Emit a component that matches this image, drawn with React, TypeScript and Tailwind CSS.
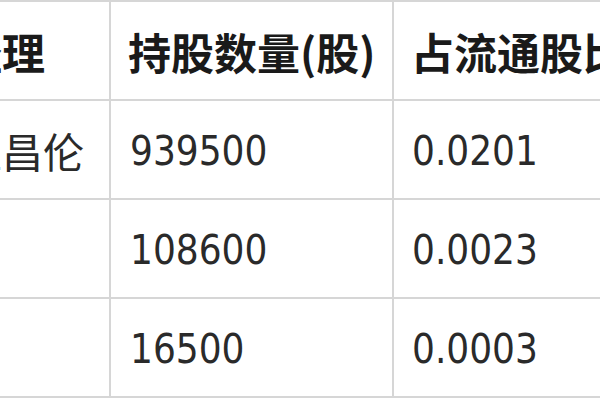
import React from "react";

const rows = [
  { name: "王昌伦", namePl: "pl-[102px]", qty: "939500", ratio: "0.0201" },
  { name: "", namePl: "pl-[102px]", qty: "108600", ratio: "0.0023" },
  { name: "", namePl: "pl-[102px]", qty: "16500", ratio: "0.0003" },
];

const cjk = "font-['Noto_Sans_CJK_SC','Noto_Sans',sans-serif]";
const num = "font-['DejaVu_Sans_Condensed','Liberation_Sans',sans-serif]";

export default function App() {
  return (
    <div className="w-[600px] h-[400px] overflow-hidden bg-white">
      <div className="ml-[-141px] w-[900px]">
        <div className="grid grid-cols-[250px_283px_367px] h-[99px] border-t-2 border-[#d6d6d6]">
          <div className="flex items-center pl-[14px] pt-[1px] text-[43px] font-bold text-[#1a1a1a] leading-none whitespace-nowrap font-['Noto_Sans_CJK_SC','Noto_Sans',sans-serif]">
            基金经理
          </div>
          <div className="flex items-center border-l-2 border-[#d6d6d6] pl-[17px] pt-[1px] text-[43px] font-bold text-[#1a1a1a] leading-none whitespace-nowrap font-['Noto_Sans_CJK_SC','Noto_Sans',sans-serif]">
            持股数量(股)
          </div>
          <div className="flex items-center border-l-2 border-[#d6d6d6] pl-[17px] pt-[1px] text-[43px] font-bold text-[#1a1a1a] leading-none whitespace-nowrap font-['Noto_Sans_CJK_SC','Noto_Sans',sans-serif]">
            占流通股比例
          </div>
        </div>
        {rows.map((r, i) => (
          <div
            key={i}
            className="grid grid-cols-[250px_283px_367px] h-[99px] border-t-2 border-[#d6d6d6]"
          >
            <div
              className={`flex items-center ${r.namePl} pt-[2px] text-[41px] text-[#2a2a2a] leading-none whitespace-nowrap ${cjk}`}
            >
              {r.name}
            </div>
            <div
              className={`flex items-center border-l-2 border-[#d6d6d6] pl-[19px] pt-[2px] text-[40px] text-[#2a2a2a] leading-none ${num}`}
            >
              {r.qty}
            </div>
            <div
              className={`flex items-center border-l-2 border-[#d6d6d6] pl-[18px] pt-[2px] text-[40px] text-[#2a2a2a] leading-none ${num}`}
            >
              {r.ratio}
            </div>
          </div>
        ))}
        <div className="h-[2px] bg-[#d6d6d6]" />
      </div>
    </div>
  );
}
